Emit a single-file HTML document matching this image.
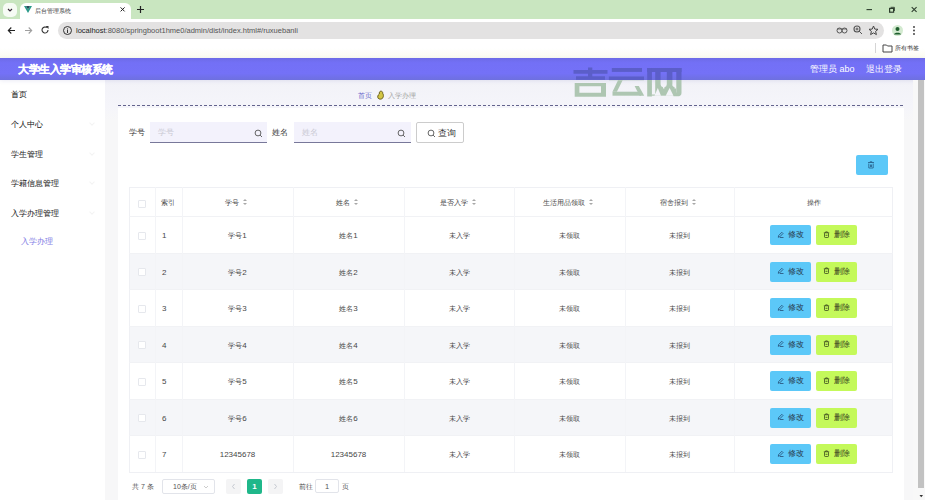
<!DOCTYPE html>
<html><head><meta charset="utf-8">
<style>
*{margin:0;padding:0;box-sizing:border-box}
html,body{width:925px;height:500px;overflow:hidden;background:#fff;font-family:"Liberation Sans",sans-serif;color:#333}
.a{position:absolute;white-space:nowrap}
.mi{font-size:7.5px;color:#262626;left:11px;line-height:10px;-webkit-text-stroke:0.05px currentColor}
.arr{left:90px;width:4px;height:4px;border-right:1px solid #f3f3f3;border-bottom:1px solid #f3f3f3;transform:rotate(45deg)}
.vl{top:187px;width:1px;height:285px;background:#f3f4f7}
.hl{left:129px;width:764px;height:1px;background:#f1f2f5}
.stripe{left:130px;width:762px;height:35px;background:#f5f6f9}
.c{font-size:7.2px;color:#474747;text-align:center;line-height:10px}
.cb{width:8px;height:8px;border:1px solid #e6e8ed;background:#fff;border-radius:1px}
.bm{width:41px;height:20px;background:#5cc8f8;border-radius:2px;font-size:7.5px;color:#26364c;text-align:center;line-height:20px}
.bd{width:41px;height:20px;background:#c4f95a;border-radius:2px;font-size:7.5px;color:#36421e;text-align:center;line-height:20px}
.sort{display:inline-block;width:4px;height:8px;vertical-align:-1px;margin-left:4.5px;margin-right:2px;position:relative}
.sort:before{content:"";position:absolute;left:-0.5px;top:0.5px;border:2.5px solid transparent;border-bottom:2.5px solid #a8a8a8;border-top:0}
.sort:after{content:"";position:absolute;left:-0.5px;top:4.5px;border:2.5px solid transparent;border-top:2.5px solid #a8a8a8;border-bottom:0}
.sic{stroke:#555;stroke-width:0.9;fill:none}
</style></head><body>
<div class="a" style="left:0px;top:0px;width:925px;height:19px;background:#c9e6c0"></div>
<div class="a" style="left:3px;top:3px;width:14px;height:14px;background:#f6fbf4;border-radius:5px"></div>
<svg class="a" style="left:7px;top:8px" width="6" height="4"><path d="M1 1 L3 3 L5 1" stroke="#3a2a3a" stroke-width="1.1" fill="none"/></svg>
<div class="a" style="left:20px;top:3px;width:111px;height:16px;background:#fff;border-radius:6px 6px 0 0"></div>
<svg class="a" style="left:23px;top:5px" width="10" height="9"><path d="M1 1 L5 8 L9 1 L7 1 L5 4.5 L3 1Z" fill="#2a9a8a"/><path d="M3 1 L5 4.5 L7 1" fill="#264b5a"/></svg>
<div class="a " style="left:35px;top:6.5px;font-size:5.7px;color:#333;line-height:8px">后台管理系统</div>
<svg class="a" style="left:119px;top:6px" width="7" height="7"><path d="M1.6 1.4L5.6 5.4M5.6 1.4L1.6 5.4" stroke="#222" stroke-width="1"/></svg>
<svg class="a" style="left:136px;top:5px" width="9" height="9"><path d="M4.5 1V8M1 4.5H8" stroke="#222" stroke-width="1.2"/></svg>
<svg class="a" style="left:864px;top:6px" width="10" height="8"><path d="M2.5 3.6H8" stroke="#2d3d2d" stroke-width="1.1"/></svg>
<svg class="a" style="left:886px;top:5px" width="10" height="10"><rect x="3.6" y="3.4" width="4" height="3.8" fill="none" stroke="#2d3d2d" stroke-width="1.2"/><path d="M4.6 2.3H8.4V6" fill="none" stroke="#2d3d2d" stroke-width="0.9"/></svg>
<svg class="a" style="left:909px;top:5px" width="10" height="10"><path d="M2.7 2.2L7.6 6.9M7.6 2.2L2.7 6.9" stroke="#2d3d2d" stroke-width="1.1"/></svg>
<div class="a" style="left:0px;top:19px;width:925px;height:21px;background:#fff"></div>
<svg class="a" style="left:7px;top:26px" width="9" height="9"><path d="M8 4.5H1.5M4.3 1.5L1.3 4.5L4.3 7.5" stroke="#222" stroke-width="1.1" fill="none"/></svg>
<svg class="a" style="left:24px;top:26px" width="9" height="9"><path d="M1 4.5H7.5M4.7 1.5L7.7 4.5L4.7 7.5" stroke="#a0a0a0" stroke-width="1.1" fill="none"/></svg>
<svg class="a" style="left:40px;top:25px" width="10" height="10"><path d="M8 5A3 3 0 1 1 6.8 2.6" stroke="#333" stroke-width="1.1" fill="none"/><path d="M5.5 1H8.5V4Z" fill="#333"/></svg>
<div class="a" style="left:58px;top:22px;width:826px;height:16.5px;background:#e3e2e2;border-radius:9px"></div>
<svg class="a" style="left:62px;top:25px" width="11" height="11"><circle cx="5.5" cy="5.5" r="4" stroke="#333" stroke-width="1" fill="none"/><path d="M5.5 4.5V8M5.5 3V3.6" stroke="#333" stroke-width="1"/></svg>
<div class="a " style="left:76px;top:26px;font-size:7.5px;line-height:10px;color:#555"><span style="color:#222">localhost</span>:8080/springboot1hme0/admin/dist/index.html#/ruxuebanli</div>
<svg class="a" style="left:836px;top:26px" width="12" height="9"><circle cx="3.5" cy="4.5" r="2.5" stroke="#555" stroke-width="1" fill="none"/><circle cx="8.5" cy="4.5" r="2.5" stroke="#555" stroke-width="1" fill="none"/><path d="M1 3H11" stroke="#555" stroke-width="0.8"/></svg>
<svg class="a" style="left:853px;top:25px" width="10" height="10"><circle cx="4" cy="4" r="3" stroke="#555" stroke-width="1.1" fill="none"/><path d="M6.2 6.2L9 9M2.5 4H5.5M4 2.5V5.5" stroke="#555" stroke-width="1"/></svg>
<svg class="a" style="left:868px;top:25px" width="11" height="11"><path d="M5.5 1L6.8 4.1L10 4.3L7.6 6.4L8.4 9.6L5.5 7.9L2.6 9.6L3.4 6.4L1 4.3L4.2 4.1Z" stroke="#444" stroke-width="1" fill="none"/></svg>
<div class="a" style="left:892px;top:25px;width:11px;height:11px;border-radius:50%;background:#d3ead0"></div>
<svg class="a" style="left:892px;top:25px" width="11" height="11"><circle cx="5.5" cy="4" r="2" fill="#1f5f2e"/><path d="M2 9.5C2 7 9 7 9 9.5Z" fill="#1f5f2e"/></svg>
<svg class="a" style="left:912px;top:25px" width="4" height="11"><circle cx="2" cy="2" r="0.9" fill="#333"/><circle cx="2" cy="5.5" r="0.9" fill="#333"/><circle cx="2" cy="9" r="0.9" fill="#333"/></svg>
<div class="a" style="left:0px;top:40px;width:925px;height:18px;background:linear-gradient(#fff 0,#fff 45%,#fbfcf0 100%)"></div>
<div class="a" style="left:875px;top:43px;width:1px;height:10px;background:#d5d5d5"></div>
<svg class="a" style="left:882px;top:43px" width="11" height="10"><path d="M1 2H4.5L5.5 3H10V9H1Z" stroke="#444" stroke-width="1" fill="none"/></svg>
<div class="a " style="left:895px;top:44px;font-size:5.8px;line-height:8px;color:#333">所有书签</div>
<div class="a" style="left:105px;top:80px;width:820px;height:420px;background:linear-gradient(#f2f2f8 0,#f5f5fa 26px,#f7f7f8 40px)"></div>
<div class="a" style="left:0px;top:80px;width:105px;height:420px;background:#fff"></div>
<div class="a" style="left:0px;top:58px;width:925px;height:22px;background:linear-gradient(#6d6be6 0,#7370f6 22%,#7471f7 70%,#6e70df 100%);box-shadow:0 1px 4px rgba(90,90,170,0.12)"></div>
<div class="a " style="left:18px;top:63px;font-size:11px;font-weight:bold;color:#fff;line-height:13px;letter-spacing:-0.45px;-webkit-text-stroke:0.25px #fff">大学生入学审核系统</div>
<div class="a " style="left:810px;top:64px;font-size:9px;color:#fff;line-height:11px">管理员 abo</div>
<div class="a " style="left:866px;top:64px;font-size:9px;color:#fff;line-height:11px">退出登录</div>
<div class="a mi" style="left:11px;top:90px;">首页</div>
<div class="a mi" style="left:11px;top:120px;">个人中心</div>
<div class="a mi" style="left:11px;top:150px;">学生管理</div>
<div class="a mi" style="left:11px;top:179px;">学籍信息管理</div>
<div class="a mi" style="left:11px;top:209px;">入学办理管理</div>
<div class="a arr" style="top:121px"></div>
<div class="a arr" style="top:151px"></div>
<div class="a arr" style="top:180px"></div>
<div class="a arr" style="top:210px"></div>
<div class="a mi" style="left:21px;top:237px;color:#8580e6">入学办理</div>
<div class="a" style="left:118px;top:108px;width:786px;height:392px;background:#fff"></div>
<div class="a" style="left:118px;top:105px;width:786px;height:1px;background:repeating-linear-gradient(90deg,#64648e 0 2.8px,transparent 2.8px 4.8px)"></div>
<div class="a " style="left:358px;top:91px;font-size:7px;line-height:10px;color:#6d6dcc">首页</div>
<svg class="a" style="left:376px;top:90px" width="9" height="11"><path d="M4.6 1.2C6 1 6.9 2 6.7 3.3C7.6 4.3 7.6 6.5 6.9 7.8C6 9.4 3.3 9.6 2.2 8.3C1.2 7 1.8 5 3.3 4C3.2 2.4 3.6 1.4 4.6 1.2Z" fill="#d2c544" stroke="#5e5412" stroke-width="0.9"/></svg>
<div class="a " style="left:388px;top:90.5px;font-size:7.4px;line-height:10px;color:#a6a6a6">入学办理</div>
<div class="a " style="left:129px;top:128px;font-size:8px;line-height:10px;color:#333">学号</div>
<div class="a" style="left:150px;top:122px;width:117px;height:21px;background:#f3f2fc;border-bottom:1.5px solid #78789a"></div>
<div class="a " style="left:158px;top:128px;font-size:7.5px;line-height:10px;color:#c8c8d2">学号</div>
<svg class="a" style="left:254px;top:129px" width="9" height="9"><circle cx="4" cy="4" r="2.9" class="sic"/><path d="M6.1 6.1L8 8" class="sic"/></svg>
<div class="a " style="left:272px;top:128px;font-size:8px;line-height:10px;color:#333">姓名</div>
<div class="a" style="left:294px;top:122px;width:117px;height:21px;background:#f3f2fc;border-bottom:1.5px solid #78789a"></div>
<div class="a " style="left:302px;top:128px;font-size:7.5px;line-height:10px;color:#c8c8d2">姓名</div>
<svg class="a" style="left:397px;top:129px" width="9" height="9"><circle cx="4" cy="4" r="2.9" class="sic"/><path d="M6.1 6.1L8 8" class="sic"/></svg>
<div class="a" style="left:416px;top:122px;width:48px;height:21px;border:1px solid #cccccc;border-radius:2px;background:#fff"></div>
<svg class="a" style="left:427px;top:129px" width="9" height="9"><circle cx="4" cy="4" r="2.9" class="sic"/><path d="M6.1 6.1L8 8" class="sic"/></svg>
<div class="a " style="left:438px;top:128px;font-size:8.5px;line-height:10px;color:#333">查询</div>
<div class="a" style="left:856px;top:155px;width:32px;height:20px;background:#5cc8f8;border-radius:2px"></div>
<svg class="a" style="left:867px;top:161px" width="8" height="8"><path d="M1 1.5H7M3 1.5V0.8H5V1.5M1.8 2.5V7H6.2V2.5M3.5 3.5V6M4.5 3.5V6" stroke="#245a85" stroke-width="0.8" fill="none"/></svg>
<div class="a" style="left:129px;top:187px;width:764px;height:286px;border:1px solid #eff0f4;background:#fff"></div>
<div class="a stripe" style="top:253.5px"></div>
<div class="a stripe" style="top:326.5px"></div>
<div class="a stripe" style="top:399.5px"></div>
<div class="a hl" style="top:216.0px"></div>
<div class="a hl" style="top:252.5px"></div>
<div class="a hl" style="top:289.0px"></div>
<div class="a hl" style="top:325.5px"></div>
<div class="a hl" style="top:362.0px"></div>
<div class="a hl" style="top:398.5px"></div>
<div class="a hl" style="top:435.0px"></div>
<div class="a vl" style="left:155px"></div>
<div class="a vl" style="left:182px"></div>
<div class="a vl" style="left:293px"></div>
<div class="a vl" style="left:404px"></div>
<div class="a vl" style="left:514px"></div>
<div class="a vl" style="left:625px"></div>
<div class="a vl" style="left:734px"></div>
<div class="a cb" style="left:138px;top:200px"></div>
<div class="a c" style="left:161px;top:198px;text-align:left">索引</div>
<div class="a c" style="left:182px;top:198px;width:111px">学号<span class="sort"></span></div>
<div class="a c" style="left:293px;top:198px;width:111px">姓名<span class="sort"></span></div>
<div class="a c" style="left:404px;top:198px;width:110px">是否入学<span class="sort"></span></div>
<div class="a c" style="left:514px;top:198px;width:111px">生活用品领取<span class="sort"></span></div>
<div class="a c" style="left:625px;top:198px;width:109px">宿舍报到<span class="sort"></span></div>
<div class="a c" style="left:734px;top:198px;width:159px">操作</div>
<div class="a cb" style="left:138px;top:231.7px"></div>
<div class="a c" style="left:162px;top:231.2px;text-align:left;font-size:8px">1</div>
<div class="a c" style="left:182px;top:231.2px;width:111px">学号<span style="font-size:8px">1</span></div>
<div class="a c" style="left:293px;top:231.2px;width:111px">姓名<span style="font-size:8px">1</span></div>
<div class="a c" style="left:404px;top:231.2px;width:110px">未入学</div>
<div class="a c" style="left:514px;top:231.2px;width:111px">未领取</div>
<div class="a c" style="left:625px;top:231.2px;width:109px">未报到</div>
<div class="a bm" style="left:770px;top:225.0px"><svg width="7" height="7" style="vertical-align:-0.5px;margin-right:4px"><path d="M1.3 6.3L1.6 4.6L4.8 1.3L6 2.5L2.8 5.8Z M3 6.5H6.5" stroke="#22466e" stroke-width="0.75" fill="none"/></svg>修改</div>
<div class="a bd" style="left:816px;top:225.0px"><svg width="7" height="7" style="vertical-align:-0.5px;margin-right:4px"><path d="M0.8 1.8H6.2M2.6 1.8V0.9H4.4V1.8M1.5 2.2V5.8Q1.5 6.5 2.2 6.5H4.8Q5.5 6.5 5.5 5.8V2.2M2.5 4.3H4.5" stroke="#34401c" stroke-width="0.75" fill="none"/></svg>删除</div>
<div class="a cb" style="left:138px;top:268.2px"></div>
<div class="a c" style="left:162px;top:267.7px;text-align:left;font-size:8px">2</div>
<div class="a c" style="left:182px;top:267.7px;width:111px">学号<span style="font-size:8px">2</span></div>
<div class="a c" style="left:293px;top:267.7px;width:111px">姓名<span style="font-size:8px">2</span></div>
<div class="a c" style="left:404px;top:267.7px;width:110px">未入学</div>
<div class="a c" style="left:514px;top:267.7px;width:111px">未领取</div>
<div class="a c" style="left:625px;top:267.7px;width:109px">未报到</div>
<div class="a bm" style="left:770px;top:261.5px"><svg width="7" height="7" style="vertical-align:-0.5px;margin-right:4px"><path d="M1.3 6.3L1.6 4.6L4.8 1.3L6 2.5L2.8 5.8Z M3 6.5H6.5" stroke="#22466e" stroke-width="0.75" fill="none"/></svg>修改</div>
<div class="a bd" style="left:816px;top:261.5px"><svg width="7" height="7" style="vertical-align:-0.5px;margin-right:4px"><path d="M0.8 1.8H6.2M2.6 1.8V0.9H4.4V1.8M1.5 2.2V5.8Q1.5 6.5 2.2 6.5H4.8Q5.5 6.5 5.5 5.8V2.2M2.5 4.3H4.5" stroke="#34401c" stroke-width="0.75" fill="none"/></svg>删除</div>
<div class="a cb" style="left:138px;top:304.7px"></div>
<div class="a c" style="left:162px;top:304.2px;text-align:left;font-size:8px">3</div>
<div class="a c" style="left:182px;top:304.2px;width:111px">学号<span style="font-size:8px">3</span></div>
<div class="a c" style="left:293px;top:304.2px;width:111px">姓名<span style="font-size:8px">3</span></div>
<div class="a c" style="left:404px;top:304.2px;width:110px">未入学</div>
<div class="a c" style="left:514px;top:304.2px;width:111px">未领取</div>
<div class="a c" style="left:625px;top:304.2px;width:109px">未报到</div>
<div class="a bm" style="left:770px;top:298.0px"><svg width="7" height="7" style="vertical-align:-0.5px;margin-right:4px"><path d="M1.3 6.3L1.6 4.6L4.8 1.3L6 2.5L2.8 5.8Z M3 6.5H6.5" stroke="#22466e" stroke-width="0.75" fill="none"/></svg>修改</div>
<div class="a bd" style="left:816px;top:298.0px"><svg width="7" height="7" style="vertical-align:-0.5px;margin-right:4px"><path d="M0.8 1.8H6.2M2.6 1.8V0.9H4.4V1.8M1.5 2.2V5.8Q1.5 6.5 2.2 6.5H4.8Q5.5 6.5 5.5 5.8V2.2M2.5 4.3H4.5" stroke="#34401c" stroke-width="0.75" fill="none"/></svg>删除</div>
<div class="a cb" style="left:138px;top:341.2px"></div>
<div class="a c" style="left:162px;top:340.7px;text-align:left;font-size:8px">4</div>
<div class="a c" style="left:182px;top:340.7px;width:111px">学号<span style="font-size:8px">4</span></div>
<div class="a c" style="left:293px;top:340.7px;width:111px">姓名<span style="font-size:8px">4</span></div>
<div class="a c" style="left:404px;top:340.7px;width:110px">未入学</div>
<div class="a c" style="left:514px;top:340.7px;width:111px">未领取</div>
<div class="a c" style="left:625px;top:340.7px;width:109px">未报到</div>
<div class="a bm" style="left:770px;top:334.5px"><svg width="7" height="7" style="vertical-align:-0.5px;margin-right:4px"><path d="M1.3 6.3L1.6 4.6L4.8 1.3L6 2.5L2.8 5.8Z M3 6.5H6.5" stroke="#22466e" stroke-width="0.75" fill="none"/></svg>修改</div>
<div class="a bd" style="left:816px;top:334.5px"><svg width="7" height="7" style="vertical-align:-0.5px;margin-right:4px"><path d="M0.8 1.8H6.2M2.6 1.8V0.9H4.4V1.8M1.5 2.2V5.8Q1.5 6.5 2.2 6.5H4.8Q5.5 6.5 5.5 5.8V2.2M2.5 4.3H4.5" stroke="#34401c" stroke-width="0.75" fill="none"/></svg>删除</div>
<div class="a cb" style="left:138px;top:377.7px"></div>
<div class="a c" style="left:162px;top:377.2px;text-align:left;font-size:8px">5</div>
<div class="a c" style="left:182px;top:377.2px;width:111px">学号<span style="font-size:8px">5</span></div>
<div class="a c" style="left:293px;top:377.2px;width:111px">姓名<span style="font-size:8px">5</span></div>
<div class="a c" style="left:404px;top:377.2px;width:110px">未入学</div>
<div class="a c" style="left:514px;top:377.2px;width:111px">未领取</div>
<div class="a c" style="left:625px;top:377.2px;width:109px">未报到</div>
<div class="a bm" style="left:770px;top:371.0px"><svg width="7" height="7" style="vertical-align:-0.5px;margin-right:4px"><path d="M1.3 6.3L1.6 4.6L4.8 1.3L6 2.5L2.8 5.8Z M3 6.5H6.5" stroke="#22466e" stroke-width="0.75" fill="none"/></svg>修改</div>
<div class="a bd" style="left:816px;top:371.0px"><svg width="7" height="7" style="vertical-align:-0.5px;margin-right:4px"><path d="M0.8 1.8H6.2M2.6 1.8V0.9H4.4V1.8M1.5 2.2V5.8Q1.5 6.5 2.2 6.5H4.8Q5.5 6.5 5.5 5.8V2.2M2.5 4.3H4.5" stroke="#34401c" stroke-width="0.75" fill="none"/></svg>删除</div>
<div class="a cb" style="left:138px;top:414.2px"></div>
<div class="a c" style="left:162px;top:413.7px;text-align:left;font-size:8px">6</div>
<div class="a c" style="left:182px;top:413.7px;width:111px">学号<span style="font-size:8px">6</span></div>
<div class="a c" style="left:293px;top:413.7px;width:111px">姓名<span style="font-size:8px">6</span></div>
<div class="a c" style="left:404px;top:413.7px;width:110px">未入学</div>
<div class="a c" style="left:514px;top:413.7px;width:111px">未领取</div>
<div class="a c" style="left:625px;top:413.7px;width:109px">未报到</div>
<div class="a bm" style="left:770px;top:407.5px"><svg width="7" height="7" style="vertical-align:-0.5px;margin-right:4px"><path d="M1.3 6.3L1.6 4.6L4.8 1.3L6 2.5L2.8 5.8Z M3 6.5H6.5" stroke="#22466e" stroke-width="0.75" fill="none"/></svg>修改</div>
<div class="a bd" style="left:816px;top:407.5px"><svg width="7" height="7" style="vertical-align:-0.5px;margin-right:4px"><path d="M0.8 1.8H6.2M2.6 1.8V0.9H4.4V1.8M1.5 2.2V5.8Q1.5 6.5 2.2 6.5H4.8Q5.5 6.5 5.5 5.8V2.2M2.5 4.3H4.5" stroke="#34401c" stroke-width="0.75" fill="none"/></svg>删除</div>
<div class="a cb" style="left:138px;top:450.7px"></div>
<div class="a c" style="left:162px;top:450.2px;text-align:left;font-size:8px">7</div>
<div class="a c" style="left:182px;top:450.2px;width:111px"><span style="font-size:8px">12345678</span></div>
<div class="a c" style="left:293px;top:450.2px;width:111px"><span style="font-size:8px">12345678</span></div>
<div class="a c" style="left:404px;top:450.2px;width:110px">未入学</div>
<div class="a c" style="left:514px;top:450.2px;width:111px">未领取</div>
<div class="a c" style="left:625px;top:450.2px;width:109px">未报到</div>
<div class="a bm" style="left:770px;top:444.0px"><svg width="7" height="7" style="vertical-align:-0.5px;margin-right:4px"><path d="M1.3 6.3L1.6 4.6L4.8 1.3L6 2.5L2.8 5.8Z M3 6.5H6.5" stroke="#22466e" stroke-width="0.75" fill="none"/></svg>修改</div>
<div class="a bd" style="left:816px;top:444.0px"><svg width="7" height="7" style="vertical-align:-0.5px;margin-right:4px"><path d="M0.8 1.8H6.2M2.6 1.8V0.9H4.4V1.8M1.5 2.2V5.8Q1.5 6.5 2.2 6.5H4.8Q5.5 6.5 5.5 5.8V2.2M2.5 4.3H4.5" stroke="#34401c" stroke-width="0.75" fill="none"/></svg>删除</div>
<div class="a " style="left:132px;top:482px;font-size:7px;line-height:10px;color:#555">共 7 条</div>
<div class="a" style="left:162px;top:479px;width:53px;height:15px;border:1px solid #e2e4ea;border-radius:2px;background:#fff"></div>
<div class="a " style="left:173px;top:482px;font-size:7px;line-height:10px;color:#555">10条/页</div>
<svg class="a" style="left:203px;top:485px" width="6" height="4"><path d="M1 1L3 3L5 1" stroke="#c0c0c0" stroke-width="0.8" fill="none"/></svg>
<div class="a" style="left:226px;top:479px;width:15px;height:15px;background:#f4f4f5;border-radius:2px"></div>
<svg class="a" style="left:231px;top:483px" width="5" height="7"><path d="M3.5 1L1.5 3.5L3.5 6" stroke="#c0c4cc" stroke-width="0.9" fill="none"/></svg>
<div class="a" style="left:247px;top:479px;width:15px;height:15px;background:#1fb78a;border-radius:2px;color:#fff;font-size:8px;font-weight:bold;text-align:center;line-height:15px">1</div>
<div class="a" style="left:268px;top:479px;width:15px;height:15px;background:#f4f4f5;border-radius:2px"></div>
<svg class="a" style="left:273px;top:483px" width="5" height="7"><path d="M1.5 1L3.5 3.5L1.5 6" stroke="#c0c4cc" stroke-width="0.9" fill="none"/></svg>
<div class="a " style="left:299px;top:482px;font-size:7px;line-height:10px;color:#555">前往</div>
<div class="a" style="left:315px;top:479px;width:24px;height:14px;border:1px solid #e2e4ea;border-radius:2px;background:#fff;font-size:7.5px;color:#555;text-align:center;line-height:13px">1</div>
<div class="a " style="left:342px;top:482px;font-size:7px;line-height:10px;color:#555">页</div>
<div class="a" style="left:913px;top:80px;width:12px;height:420px;background:#f8f8f8"></div>
<div class="a" style="left:918px;top:80px;width:6px;height:408px;background:#c2c2c2"></div>
<svg class="a" style="left:918px;top:494px" width="7" height="5"><path d="M1.5 1H5L3.25 3.2Z" fill="#333"/></svg>
<svg class="a" style="left:0;top:0" width="925" height="110" viewBox="0 0 925 110"><defs><clipPath id="ct"><rect x="0" y="58" width="925" height="22"/></clipPath><clipPath id="cb"><rect x="0" y="80" width="925" height="30"/></clipPath><mask id="wm" maskUnits="userSpaceOnUse" x="640" y="60" width="50" height="40"><rect x="640" y="60" width="50" height="40" fill="#fff"/><path fill="#000" d="M651.9 72H655.2V94.6H651.9Z M660.6 72H666.8V84A3.1 3.1 0 0 1 664.4 87.2V88.5H663V87.2A3.1 3.1 0 0 1 660.6 84Z M672.4 72H676.4V88.5H674.6V87.2A2.5 2.5 0 0 1 672.4 84Z M654.5 95.8L657.8 88L661 95.8Z M665.7 95.8L669.6 88L673.5 95.8Z"/></mask></defs><g clip-path="url(#ct)" fill="#5b5ec9">
<path d="M588 67.5H592.3V79H588Z"/>
<path d="M573.5 70H607.5V73.7H573.5Z"/>
<path d="M576 76.3H605V79.8H576Z"/>
<path fill-rule="evenodd" d="M574.7 83H606V96.7H574.7Z M579.4 86.3V92.8H601V86.3Z"/>
<path d="M611.8 68H642V71.9H611.8Z"/>
<path d="M608.9 76.6H644V80.2H608.9Z"/>
<path d="M618 80.2H622.6L616.9 91.8H612.5Z"/>
<path d="M612.5 91.7H641V95.7H612.5Z"/>
<path d="M634.6 86H638.8L644.2 95.7H639.6Z"/>
<path d="M647.2 68H681.5V72H647.2Z"/>
<path d="M647.2 68H651.9V96.5H647.2Z"/>
<path d="M676.4 68H681.5V93C681.5 95.5 680 96.3 677.5 96.3H673.5V92.5H676.4Z"/>
<path mask="url(#wm)" d="M651.9 72H676.4V95.7H651.9Z"/>
</g><g clip-path="url(#cb)" fill="#aec6b2">
<path d="M588 67.5H592.3V79H588Z"/>
<path d="M573.5 70H607.5V73.7H573.5Z"/>
<path d="M576 76.3H605V79.8H576Z"/>
<path fill-rule="evenodd" d="M574.7 83H606V96.7H574.7Z M579.4 86.3V92.8H601V86.3Z"/>
<path d="M611.8 68H642V71.9H611.8Z"/>
<path d="M608.9 76.6H644V80.2H608.9Z"/>
<path d="M618 80.2H622.6L616.9 91.8H612.5Z"/>
<path d="M612.5 91.7H641V95.7H612.5Z"/>
<path d="M634.6 86H638.8L644.2 95.7H639.6Z"/>
<path d="M647.2 68H681.5V72H647.2Z"/>
<path d="M647.2 68H651.9V96.5H647.2Z"/>
<path d="M676.4 68H681.5V93C681.5 95.5 680 96.3 677.5 96.3H673.5V92.5H676.4Z"/>
<path mask="url(#wm)" d="M651.9 72H676.4V95.7H651.9Z"/>
</g></svg>
</body></html>
